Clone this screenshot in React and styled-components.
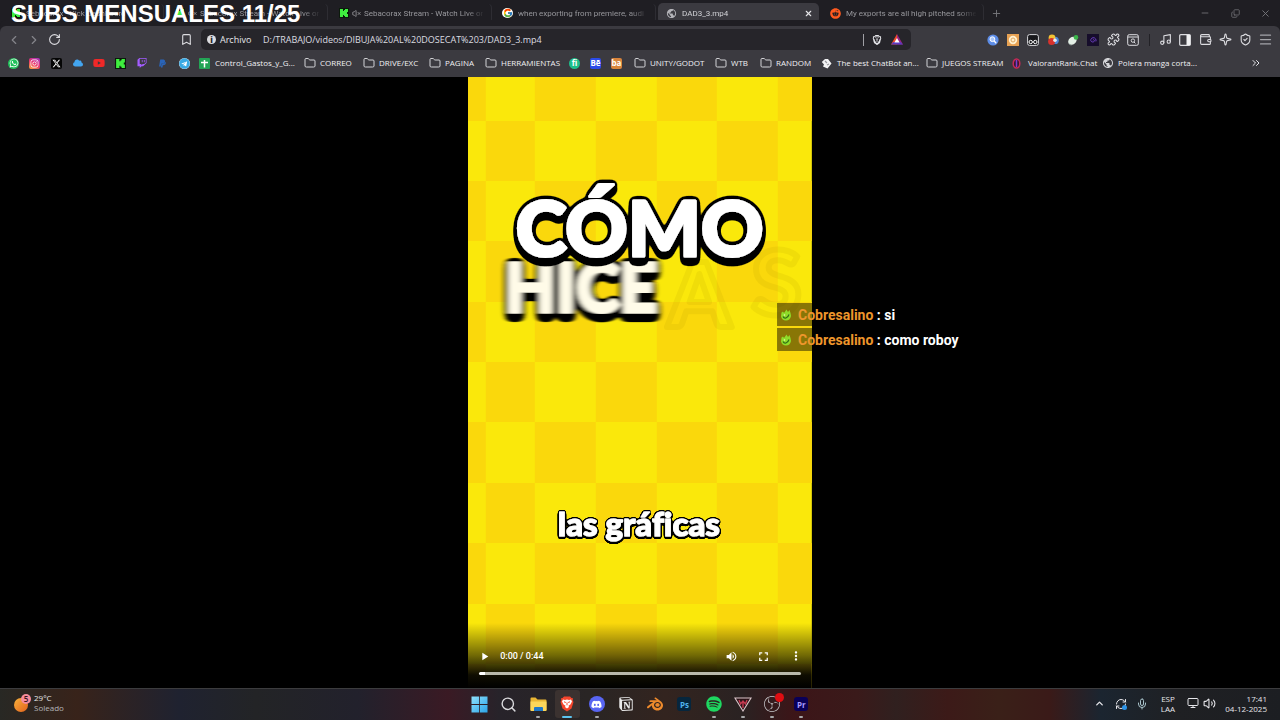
import React from "react";
import styled, { createGlobalStyle } from "styled-components";
import {
  Bookmark as BookmarkIcon,
  ChevronLeft,
  ChevronRight,
  ChevronUp,
  ChevronsRight,
  Copy,
  Folder,
  Menu,
  Mic,
  Minus,
  Monitor,
  Music,
  Plus,
  Puzzle,
  RefreshCw,
  RotateCw,
  Search,
  ShieldCheck,
  Sparkle,
  Volume2,
  VolumeX,
  Wallet,
  X,
} from "lucide-react";
import {
  FaCloud,
  FaInstagram,
  FaPaypal,
  FaReddit,
  FaTelegram,
  FaTwitch,
  FaWhatsapp,
  FaYoutube,
  FaDiscord,
  FaSpotify,
} from "react-icons/fa";
import { FaXTwitter } from "react-icons/fa6";
import { FcGoogle } from "react-icons/fc";
import { MdMoreVert, MdPlayArrow, MdPublic, MdVolumeUp, MdFullscreen } from "react-icons/md";
import { SiBlender, SiBrave, SiNotion, SiObsstudio } from "react-icons/si";

const KickLogo = ({ size = 10 }) => (
  <svg width={size} height={size} viewBox="0 0 10 10">
    <rect width="10" height="10" fill="#0b1a0b" />
    <path
      d="M1 1h3v2h1V2h1V1h3v3H8v1H7v0h1v1h1v3H6V8H5V7H4v2H1z"
      fill="#3fee3f"
    />
  </svg>
);

const SheetLogo = () => (
  <svg width="11" height="11" viewBox="0 0 11 11">
    <rect width="11" height="11" rx="1" fill="#23a455" />
    <path d="M5.5 2v7.5M2 4.5h7" stroke="#fff" strokeWidth="1.5" />
  </svg>
);

const BatLogo = () => (
  <svg width="12" height="11" viewBox="0 0 12 11">
    <path d="M6 0L0 10.5h6z" fill="#ef4a2b" />
    <path d="M6 0l6 10.5H6z" fill="#9b2384" />
    <path d="M0 10.5h12L9.5 8h-7z" fill="#5b3ac0" />
    <path d="M6 4L3.4 8.6h5.2z" fill="#fff" />
  </svg>
);

const LensIcon = () => (
  <svg width="12" height="12" viewBox="0 0 12 12">
    <circle cx="6" cy="6" r="5.6" fill="#5d8de8" />
    <circle cx="5.4" cy="5.2" r="2.4" fill="#a9c6fa" stroke="#fff" />
    <path d="M7.2 7l2 2.2" stroke="#fff" strokeWidth="1.3" />
  </svg>
);

const CookieIcon = () => (
  <svg width="12" height="12" viewBox="0 0 12 12">
    <rect width="12" height="12" fill="#e6a153" />
    <circle cx="6" cy="6" r="4.2" fill="#fff0cf" />
    <circle cx="6" cy="6" r="2" fill="none" stroke="#e0a860" />
  </svg>
);

const MaskIcon = () => (
  <svg width="12" height="12" viewBox="0 0 12 12">
    <rect x=".6" y=".6" width="10.8" height="10.8" rx="2" fill="#17171b" stroke="#d8d8dc" />
    <circle cx="3.7" cy="8" r="1.7" fill="none" stroke="#fff" />
    <circle cx="8.3" cy="8" r="1.7" fill="none" stroke="#fff" />
  </svg>
);

const BallsIcon = () => (
  <svg width="12" height="12" viewBox="0 0 12 12">
    <circle cx="8.2" cy="6.4" r="3.6" fill="#4b86d8" />
    <circle cx="5" cy="4" r="3.4" fill="#f2c233" />
    <circle cx="4.6" cy="7.6" r="3.5" fill="#d8322c" />
    <circle cx="8" cy="6.2" r="1.8" fill="#e9ecef" />
  </svg>
);

const LeafIcon = () => (
  <svg width="12" height="12" viewBox="0 0 12 12">
    <ellipse cx="5.4" cy="6.8" rx="4.6" ry="3.6" transform="rotate(-40 5.4 6.8)" fill="#e4efe6" />
    <circle cx="9" cy="3.4" r="2.3" fill="#3bb54a" />
    <path d="M2 9.5l2 2" stroke="#8fa39a" />
  </svg>
);

const SpiralIcon = () => (
  <svg width="12" height="12" viewBox="0 0 12 12">
    <rect width="12" height="12" fill="#160d2b" />
    <path d="M6 6.3c0-1 1.6-.8 1.5.4S5.4 8.5 4.3 7.5 3.8 4 6 3.7s3.6 2 2.9 3.7" fill="none" stroke="#6b3fc0" />
  </svg>
);

const ArchiveSearch = () => (
  <svg width="12" height="12" viewBox="0 0 12 12" fill="none" stroke="#dcdce0">
    <rect x=".7" y=".7" width="10.6" height="10.6" rx="1.5" />
    <path d="M.7 3h10.6M7 8l1.4 1.4" />
    <circle cx="5.9" cy="6.6" r="1.7" />
  </svg>
);

const SidebarIcon = () => (
  <svg width="12" height="12" viewBox="0 0 12 12">
    <rect x=".7" y=".7" width="10.6" height="10.6" rx="1" fill="none" stroke="#dcdce0" strokeWidth="1.2" />
    <path d="M7.5 1h3.8v10H7.5z" fill="#f0f0f2" />
  </svg>
);

const DiceIcon = () => (
  <svg width="11" height="11" viewBox="0 0 11 11">
    <path d="M4 1h3l3.5 4.5-4 5L2 8.5l1-2L.8 4z" fill="#f3f3f5" />
    <path d="M4 3l2 2M6 7l2-1" stroke="#98989e" strokeWidth="1.2" />
  </svg>
);

const ValorantIcon = () => (
  <svg width="9" height="11" viewBox="0 0 9 11">
    <ellipse cx="4.5" cy="5.5" rx="3.3" ry="4.5" fill="#3a1630" stroke="#c52a58" strokeWidth="1.5" />
    <path d="M4.5 2v7" stroke="#7d3cd0" strokeWidth="1.5" />
  </svg>
);

const WindowsLogo = () => (
  <svg width="17" height="17" viewBox="0 0 17 17">
    <defs>
      <linearGradient id="win" x1="0" y1="0" x2="1" y2="1">
        <stop offset="0" stopColor="#8fe0fb" />
        <stop offset="1" stopColor="#2ba4e8" />
      </linearGradient>
    </defs>
    <path d="M.5.5h7.6v7.6H.5zM8.9.5h7.6v7.6H8.9zM.5 8.9h7.6v7.6H.5zM8.9 8.9h7.6v7.6H8.9z" fill="url(#win)" />
  </svg>
);

const ExplorerLogo = () => (
  <svg width="17" height="15" viewBox="0 0 17 15">
    <path d="M.5 1.5q0-1 1-1h4l2 2h8q1 0 1 1V13q0 1-1 1h-14q-1 0-1-1z" fill="#e9b634" />
    <path d="M.5 4.5h16V13q0 1-1 1h-14q-1 0-1-1z" fill="#fbd65a" />
    <path d="M4 14v-3q0-1 1-1h7q1 0 1 1v3z" fill="#1f78c8" />
  </svg>
);

const BraveLogo = () => (
  <svg width="14" height="16" viewBox="0 0 14 16">
    <path d="M4 .5h6l1.5 1.5 1.5.3-.3 2.2.8 1.5-2 6.5L7 15.500 2.500 12.500.5 6l.8-1.500L1 2.300 2.500 2z" fill="#f4452c" />
    <path d="M3 3.5l2 .5 2-.6 2 .6 2-.5 1 2-1.6 3L8.500 9.700 9 11l-2 1.600L5 11l.5-1.300-1.900-1.200L2 5.500z" fill="#fff" />
    <path d="M4 5.8l1.8.7M10 5.8l-1.8.7M7 6.5v2.8" stroke="#f4452c" />
  </svg>
);

const CrestLogo = () => (
  <svg width="18" height="15" viewBox="0 0 18 15" fill="none">
    <path d="M1 1h16L9 14z" fill="#2a1418" stroke="#d9c4c8" strokeWidth="1.1" />
    <path d="M5 3l1.5 4L9 4l2.5 3L13 3M9 5v6" stroke="#c43a50" strokeWidth="1.4" />
  </svg>
);

const SunIcon = () => (
  <svg width="18" height="20" viewBox="0 0 18 20">
    <defs>
      <linearGradient id="sun" x1="0" y1="0" x2="1" y2="1">
        <stop offset="0" stopColor="#f9b23c" />
        <stop offset="1" stopColor="#e2621c" />
      </linearGradient>
    </defs>
    <circle cx="7" cy="12" r="7" fill="url(#sun)" />
    <circle cx="12" cy="6" r="5" fill="#f58c9b" />
    <text x="12" y="9" textAnchor="middle" fontSize="8" fontWeight="600" fill="#3a1218">5</text>
  </svg>
);

const FrogEmote = () => (
  <svg width="12" height="12" viewBox="0 0 12 12">
    <path d="M1.500 3.500l1.500-1 1 1.500L6.500.5 8 3l1.500-2 1 3 .5 3q-1 4.500-5 4.500T1 7.500z" fill="#8fdc2a" />
    <path d="M3 7.5q1 2 3 1.500T9 5.500" fill="none" stroke="#2f6d17" strokeWidth="1.2" />
    <circle cx="4.5" cy="6" r=".8" fill="#e8ffb0" />
  </svg>
);

const tabs = [
  { title: "Sebacorax - Kick Dashboard", icon: <KickLogo /> },
  { title: "Sebacorax Stream - Watch Live or", icon: <KickLogo />, muted: true },
  { title: "Sebacorax Stream - Watch Live or", icon: <KickLogo />, muted: true },
  { title: "when exporting from premiere, audi", icon: <FcGoogle size={10} />, round: true },
  { title: "DAD3_3.mp4", icon: <MdPublic size={11} color="#b5b5ba" />, active: true },
  { title: "My exports are all high pitched some", icon: <FaReddit size={11} color="#ff5a1f" /> },
];

const quickLinks = [
  { name: "WhatsApp", bg: "#20c15a", color: "#fff", round: true, icon: <FaWhatsapp size={10} /> },
  { name: "Instagram", bg: "linear-gradient(30deg,#fbb03b,#e8316e 50%,#9b36c8)", color: "#fff", icon: <FaInstagram size={9} /> },
  { name: "X", bg: "#050505", color: "#fff", icon: <FaXTwitter size={9} /> },
  { name: "OneDrive", color: "#43a5f0", icon: <FaCloud size={10} /> },
  { name: "YouTube", color: "#f02828", icon: <FaYoutube size={12} /> },
  { name: "Kick", icon: <KickLogo size={11} /> },
  { name: "Twitch", color: "#a35cff", icon: <FaTwitch size={10} /> },
  { name: "PayPal", color: "#2a64b8", icon: <FaPaypal size={9} /> },
  { name: "Telegram", bg: "#fff", color: "#39a9e4", round: true, icon: <FaTelegram size={11} /> },
];

const folder = <Folder size={12} strokeWidth={2} color="#d4d4d8" />;

const bookmarks = [
  { name: "Control_Gastos_y_G...", width: 105, icon: <SheetLogo /> },
  { name: "CORREO", width: 59, icon: folder },
  { name: "DRIVE/EXC", width: 66, icon: folder },
  { name: "PAGINA", width: 56, icon: folder },
  { name: "HERRAMIENTAS", width: 84, icon: folder },
  { width: 21, label: "Fiverr", badge: "fi", bg: "#1dbf8a", round: true },
  { width: 21, label: "Behance", badge: "Bē", bg: "#2b4be8" },
  { width: 23, label: "Bandai", badge: "ba", bg: "#d9843c" },
  { name: "UNITY/GODOT", width: 81, icon: folder },
  { name: "WTB", width: 45, icon: folder },
  { name: "RANDOM", width: 61, icon: folder },
  { name: "The best ChatBot an...", width: 105, icon: <DiceIcon /> },
  { name: "JUEGOS STREAM", width: 86, icon: folder },
  { name: "ValorantRank.Chat", width: 90, icon: <ValorantIcon /> },
  { name: "Polera manga corta...", width: 105, icon: <MdPublic size={12} color="#d4d4d8" /> },
];

const extensions = [
  ["Lens", <LensIcon />],
  ["Cookies", <CookieIcon />],
  ["Mask", <MaskIcon />],
  ["Colors", <BallsIcon />],
  ["Leaf", <LeafIcon />],
  ["Spiral", <SpiralIcon />],
  ["Extensions", <Puzzle size={13} />],
  ["Search page", <ArchiveSearch />],
];

const tools = [
  ["Playlist", <Music size={13} />],
  ["Sidebar", <SidebarIcon />],
  ["Wallet", <Wallet size={13} />],
  ["Leo", <Sparkle size={13} />],
  ["VPN", <ShieldCheck size={13} />],
  ["Menu", <Menu size={15} color="#a4a4a9" />],
];

const apps = [
  { name: "Inicio", icon: <WindowsLogo /> },
  { name: "Buscar", icon: <Search size={17} color="#d9d9dc" strokeWidth={2} /> },
  { name: "Explorador", icon: <ExplorerLogo />, open: true },
  { name: "Brave", icon: <BraveLogo />, current: true },
  { name: "Discord", icon: <FaDiscord size={11} />, bg: "#5865f2", round: true, open: true },
  { name: "Notion", icon: <SiNotion size={14} color="#eaeaea" /> },
  { name: "Blender", icon: <SiBlender size={16} color="#ee8a2c" /> },
  { name: "Photoshop", badge: "Ps", bg: "#06263d", color: "#4fb3ee" },
  { name: "Spotify", icon: <FaSpotify size={16} color="#1ed760" />, open: true },
  { name: "Crest", icon: <CrestLogo />, open: true },
  { name: "OBS", icon: <SiObsstudio size={16} color="#c9c9cc" />, open: true, alert: true },
  { name: "Premiere", badge: "Pr", bg: "#0a0058", color: "#a99cff", open: true },
];

const columns = [0, 18, 67, 128, 189, 249, 310, 344];
const rows = [0, 44, 104, 164, 225, 285, 345, 406, 466, 527, 587, 611];

const Checkers = () => (
  <g fill="#fad80c">
    {rows.slice(0, -1).map((y, r) =>
      columns.slice(0, -1).map((x, c) =>
        (r + c) % 2 === 0 ? (
          <rect
            key={`${r}-${c}`}
            x={x}
            y={y}
            width={columns[c + 1] - x}
            height={rows[r + 1] - y}
          />
        ) : null
      )
    )}
  </g>
);

// Grows the shape into a rounded black outline and drops it down for depth
const Outline = ({ id, spread, depth }) => (
  <filter id={id} x="-10%" y="-20%" width="120%" height="150%">
    <feGaussianBlur in="SourceAlpha" stdDeviation={spread} />
    <feComponentTransfer>
      <feFuncA type="linear" slope="14" intercept="-0.7" />
    </feComponentTransfer>
    <feColorMatrix values="0 0 0 0 0  0 0 0 0 0  0 0 0 0 0  0 0 0 1 0" result="edge" />
    <feOffset in="edge" dy={depth / 2} result="mid" />
    <feOffset in="edge" dy={depth} result="low" />
    <feMerge>
      <feMergeNode in="low" />
      <feMergeNode in="mid" />
      <feMergeNode in="edge" />
      <feMergeNode in="SourceGraphic" />
    </feMerge>
  </filter>
);

const VideoFrame = () => (
  <Picture viewBox="0 0 344 611" preserveAspectRatio="xMidYMid slice">
    <defs>
      <Outline id="outline-large" spread="2.5" depth="5" />
      <Outline id="outline-small" spread="1.3" depth="1" />
      <filter id="swoosh" x="-10%" y="-10%" width="120%" height="120%">
        <feGaussianBlur stdDeviation="2.5 0.7" />
      </filter>
      <linearGradient id="shade" x1="0" y1="0" x2="0" y2="1">
        <stop offset="0" stopColor="#000" stopOpacity="0" />
        <stop offset="0.5" stopColor="#000" stopOpacity="0.55" />
        <stop offset="0.8" stopColor="#000" stopOpacity="0.94" />
        <stop offset="1" stopColor="#000" />
      </linearGradient>
    </defs>
    <rect width="344" height="611" fill="#fae80b" />
    <Checkers />
    <g fontSize="90" fill="none" stroke="#b89a00" strokeOpacity="0.14" strokeLinejoin="round" strokeWidth="6">
      <text x="200" y="250">A</text>
      <text x="284" y="238">S</text>
    </g>
    <g filter="url(#swoosh)">
      <Caption x="37" y="235" fontSize="66" strokeWidth="3" $tint="#fffbe8" filter="url(#outline-large)">HICE</Caption>
    </g>
    <Caption x="48" y="179" fontSize="77" strokeWidth="3" filter="url(#outline-large)">CÓMO</Caption>
    <Caption x="90" y="459" fontSize="33" strokeWidth="1" filter="url(#outline-small)">las gráficas</Caption>
    <rect y="546" width="344" height="65" fill="url(#shade)" />
  </Picture>
);

const App = () => {
  return (
    <Desktop>
      <GlobalStyle />
      <TabStrip>
        {tabs.map((tab, i) => (
          <Tab key={i} $active={tab.active}>
            <Favicon $round={tab.round}>{tab.icon}</Favicon>
            {tab.muted && <MutedIcon size={9} />}
            <TabTitle $active={tab.active}>{tab.title}</TabTitle>
            {tab.active && (
              <TabClose aria-label="Cerrar">
                <X size={9} strokeWidth={3} />
              </TabClose>
            )}
          </Tab>
        ))}
        <NewTab aria-label="Nueva pestaña">
          <Plus size={11} />
        </NewTab>
        <WindowButtons>
          <WindowButton aria-label="Minimizar"><Minus size={10} /></WindowButton>
          <WindowButton aria-label="Restaurar"><FlippedCopy size={9} /></WindowButton>
          <WindowButton aria-label="Cerrar ventana"><X size={11} /></WindowButton>
        </WindowButtons>
      </TabStrip>

      <Chrome>
        <Toolbar>
          <IconButton aria-label="Atrás" $dim><ChevronLeft size={14} /></IconButton>
          <IconButton aria-label="Adelante" $dim><ChevronRight size={14} /></IconButton>
          <IconButton aria-label="Recargar"><RotateCw size={13} /></IconButton>
          <SaveSlot>
            <IconButton aria-label="Guardar"><BookmarkIcon size={13} /></IconButton>
          </SaveSlot>
          <AddressBar>
            <InfoDot>i</InfoDot>
            <AddressLabel htmlFor="address">Archivo</AddressLabel>
            <AddressInput
              id="address"
              defaultValue="D:/TRABAJO/videos/DIBUJA%20AL%20DOSECAT%203/DAD3_3.mp4"
            />
            <Divider $light />
            <IconButton aria-label="Shields"><SiBrave size={10} color="#e4e4e8" /></IconButton>
            <IconButton aria-label="Rewards"><BatLogo /></IconButton>
          </AddressBar>
          <ToolGroup>
            {extensions.map(([name, icon]) => (
              <IconButton key={name} aria-label={name}>{icon}</IconButton>
            ))}
            <DividerSlot><Divider /></DividerSlot>
            {tools.map(([name, icon]) => (
              <IconButton key={name} aria-label={name}>{icon}</IconButton>
            ))}
          </ToolGroup>
        </Toolbar>
        <BookmarksBar>
          <QuickLinks>
            {quickLinks.map((link) => (
              <QuickLink key={link.name} href="#" aria-label={link.name}>
                <Badge $bg={link.bg} $color={link.color} $round={link.round}>{link.icon}</Badge>
              </QuickLink>
            ))}
          </QuickLinks>
          {bookmarks.map((item) => (
            <BookmarkLink key={item.name || item.label} href="#" aria-label={item.label} $width={item.width}>
              {item.badge ? (
                <Badge $bg={item.bg} $color="#fff" $round={item.round}>{item.badge}</Badge>
              ) : (
                <BookmarkGlyph>{item.icon}</BookmarkGlyph>
              )}
              {item.name}
            </BookmarkLink>
          ))}
          <MoreButton aria-label="Más marcadores"><ChevronsRight size={12} /></MoreButton>
        </BookmarksBar>
      </Chrome>

      <Stage>
        <Player>
          <VideoFrame />
          <Controls>
            <ControlRow>
              <ControlButton aria-label="Reproducir"><MdPlayArrow size={13} /></ControlButton>
              <Time>0:00 / 0:44</Time>
              <ControlButton aria-label="Volumen"><MdVolumeUp size={13} /></ControlButton>
              <ControlButton aria-label="Pantalla completa"><MdFullscreen size={15} /></ControlButton>
              <ControlButton aria-label="Más opciones"><MdMoreVert size={14} /></ControlButton>
            </ControlRow>
            <Progress type="range" min="0" max="44" defaultValue="1" aria-label="Progreso" />
          </Controls>
        </Player>
      </Stage>

      <Taskbar>
        <Weather>
          <SunIcon />
          <Stack>
            <span>29°C</span>
            <Muted>Soleado</Muted>
          </Stack>
        </Weather>
        <Apps>
          {apps.map((app) => (
            <AppButton key={app.name} aria-label={app.name} $current={app.current} $open={app.open}>
              {app.bg ? (
                <AppBadge $bg={app.bg} $color={app.color} $round={app.round}>
                  {app.badge || app.icon}
                </AppBadge>
              ) : (
                app.icon
              )}
              {app.alert && <AlertDot />}
            </AppButton>
          ))}
        </Apps>
        <Tray>
          <TrayButton aria-label="Iconos ocultos"><ChevronUp size={11} strokeWidth={3} /></TrayButton>
          <TrayButton aria-label="Sincronización">
            <RefreshCw size={12} />
            <SyncDot />
          </TrayButton>
          <TrayButton aria-label="Micrófono"><Mic size={12} color="#a9c4cc" /></TrayButton>
          <Language>
            <span>ESP</span>
            <span>LAA</span>
          </Language>
          <Status>
            <Monitor size={12} />
            <Volume2 size={13} />
          </Status>
          <Clock>
            <span>17:41</span>
            <span>04-12-2025</span>
          </Clock>
        </Tray>
      </Taskbar>

      <Goal>SUBS MENSUALES 11/25</Goal>
      <Chat>
        <ChatLine>
          <FrogEmote />
          <ChatText><ChatName>Cobresalino</ChatName> : si</ChatText>
        </ChatLine>
        <ChatLine>
          <FrogEmote />
          <ChatText><ChatName>Cobresalino</ChatName> : como roboy</ChatText>
        </ChatLine>
      </Chat>
    </Desktop>
  );
};

const GlobalStyle = createGlobalStyle`
  * {
    box-sizing: border-box;
  }
  body {
    margin: 0;
    background: #000;
    color: #e6e6ea;
    font-family: "Open Sans", "Noto Sans", sans-serif;
    font-size: 8px;
  }
  button {
    padding: 0;
    border: 0;
    background: none;
    color: inherit;
    font: inherit;
  }
  svg {
    flex-shrink: 0;
  }
`;

const Desktop = styled.div`
  position: relative;
  display: flex;
  flex-direction: column;
  height: 100vh;
  overflow: hidden;
`;

const TabStrip = styled.div`
  display: flex;
  align-items: center;
  height: 26px;
  padding-left: 2px;
  background: #1f1e23;
`;

const Tab = styled.div`
  display: flex;
  align-items: center;
  gap: 5px;
  width: 161px;
  height: 21px;
  margin-right: 3px;
  padding: 0 6px 0 8px;
  border-radius: 5px;
  background: ${({ $active }) => ($active ? "#3b3a40" : "transparent")};
  box-shadow: ${({ $active }) => ($active ? "none" : "2px 0 0 -1px #2e2d33")};
`;

const Favicon = styled.span`
  display: flex;
  justify-content: center;
  width: 11px;
  border-radius: ${({ $round }) => ($round ? "50%" : "0")};
  background: ${({ $round }) => ($round ? "#fff" : "transparent")};
`;

const MutedIcon = styled(VolumeX)`
  margin: 0 -2px;
  color: #a5a5aa;
`;

const TabTitle = styled.span`
  flex: 1;
  overflow: hidden;
  white-space: nowrap;
  color: ${({ $active }) => ($active ? "#d2d2d6" : "#97979c")};
  font-family: Roboto, "Open Sans", sans-serif;
  mask-image: linear-gradient(90deg, #000 85%, transparent);
`;

const TabClose = styled.button`
  display: flex;
`;

const NewTab = styled.button`
  display: flex;
  padding: 5px;
  color: #77777c;
`;

const WindowButtons = styled.div`
  display: flex;
  margin-left: auto;
`;

const WindowButton = styled.button`
  display: flex;
  align-items: center;
  justify-content: center;
  width: 30px;
  height: 26px;
  color: #77777c;
`;

const FlippedCopy = styled(Copy)`
  transform: scaleY(-1);
`;

const Chrome = styled.div`
  background: #3b3a40;
  border-radius: 6px 6px 0 0;
  box-shadow: 0 -6px 0 #1f1e23;
`;

const Toolbar = styled.div`
  display: flex;
  align-items: center;
  height: 27px;
  padding: 0 5px 0 4px;
`;

const IconButton = styled.button`
  display: flex;
  align-items: center;
  justify-content: center;
  width: 20px;
  height: 20px;
  color: ${({ $dim }) => ($dim ? "#85858a" : "#dcdce0")};
`;

const SaveSlot = styled.div`
  margin: 0 5px 0 112px;
`;

const AddressBar = styled.div`
  display: flex;
  align-items: center;
  flex: 1;
  height: 21px;
  padding: 0 4px 0 6px;
  border-radius: 5px;
  background: #26252a;
`;

const InfoDot = styled.span`
  display: flex;
  align-items: center;
  justify-content: center;
  width: 9px;
  height: 9px;
  border-radius: 50%;
  background: #dcdce0;
  color: #26252a;
  font-weight: 800;
`;

const AddressLabel = styled.label`
  width: 43px;
  margin-left: 4px;
  font-size: 9px;
`;

const AddressInput = styled.input`
  flex: 1;
  min-width: 0;
  padding: 0;
  border: 0;
  outline: 0;
  background: none;
  color: #dcdce0;
  font: inherit;
  font-size: 9px;
`;

const Divider = styled.span`
  width: 1px;
  height: 12px;
  margin-right: ${({ $light }) => ($light ? "3px" : "0")};
  background: ${({ $light }) => ($light ? "#a0a0a5" : "#222126")};
`;

const DividerSlot = styled.span`
  display: flex;
  justify-content: center;
  width: 12px;
`;

const ToolGroup = styled.div`
  display: flex;
  align-items: center;
  margin-left: 72px;
`;

const BookmarksBar = styled.div`
  display: flex;
  align-items: center;
  height: 24px;
  padding: 0 18px 4px 3px;
`;

const QuickLinks = styled.div`
  display: grid;
  grid-template-columns: repeat(9, 1fr);
  width: 192px;
  margin-right: 4px;
`;

const QuickLink = styled.a`
  display: flex;
  justify-content: center;
  text-decoration: none;
`;

const Badge = styled.span`
  display: flex;
  align-items: center;
  justify-content: center;
  width: 11px;
  height: 11px;
  border-radius: ${({ $round }) => ($round ? "50%" : "2px")};
  background: ${({ $bg }) => $bg || "transparent"};
  color: ${({ $color }) => $color || "inherit"};
  font-weight: 700;
`;

const BookmarkLink = styled.a`
  display: flex;
  align-items: center;
  width: ${({ $width }) => $width}px;
  color: #f0f0f3;
  line-height: 10px;
  text-decoration: none;
  white-space: nowrap;
`;

const BookmarkGlyph = styled.span`
  display: flex;
  width: 16px;
`;

const MoreButton = styled.button`
  display: flex;
  margin-left: auto;
`;

const Stage = styled.main`
  display: flex;
  justify-content: center;
  flex: 1;
  min-height: 0;
  background: #000;
`;

const Player = styled.div`
  position: relative;
  height: 100%;
  aspect-ratio: 9 / 16;
`;

const Picture = styled.svg`
  display: block;
  width: 100%;
  height: 100%;
  font-family: Lato, "Open Sans", sans-serif;
  font-weight: 900;
`;

const Caption = styled.text`
  fill: ${({ $tint }) => $tint || "#fff"};
  stroke: ${({ $tint }) => $tint || "#fff"};
  stroke-linejoin: round;
  font-variant-ligatures: none;
`;

const Controls = styled.div`
  position: absolute;
  inset: auto 0 0;
  padding: 0 11px 13px;
`;

const ControlRow = styled.div`
  display: flex;
  align-items: center;
  height: 22px;
  margin-right: -11px;
  margin-left: -11px;
`;

const ControlButton = styled.button`
  display: flex;
  align-items: center;
  justify-content: center;
  width: 32px;
  height: 22px;
  color: #fff;
`;

const Time = styled.span`
  flex: 1;
  color: #fff;
  font-family: Roboto, sans-serif;
  font-size: 9px;
  font-weight: 500;
`;

const Progress = styled.input`
  display: block;
  appearance: none;
  width: 100%;
  height: 3px;
  margin: 5px 0 0;
  border-radius: 2px;
  background: linear-gradient(90deg, #fff 2%, #b9b9ab 2%);

  &::-webkit-slider-thumb {
    appearance: none;
    width: 1px;
    height: 1px;
  }
`;

const Taskbar = styled.footer`
  display: grid;
  grid-template-columns: 1fr 352px 1fr;
  height: 32px;
  box-shadow: inset 0 1px 0 #3c3c3e;
  background: linear-gradient(
    90deg,
    #282824 0%,
    #38231a 6%,
    #1f2230 14%,
    #232426 20%,
    #22212c 28%,
    #3a1a24 35%,
    #27232a 39%,
    #292524 46%,
    #33241f 52%,
    #2a2222 58%,
    #3c1518 62%,
    #3a1a1a 67%,
    #30201f 70%,
    #3c1a18 74%,
    #3a2018 78%,
    #3a1a18 82%,
    #1b2530 86%,
    #1f2023 92%,
    #1c1e22 100%
  );
`;

const Weather = styled.div`
  display: flex;
  align-items: center;
  gap: 2px;
  padding: 0 0 2px 14px;
`;

const Stack = styled.div`
  display: flex;
  flex-direction: column;
  line-height: 10px;
`;

const Muted = styled.span`
  color: #b5b5b8;
`;

const Apps = styled.div`
  display: grid;
  grid-template-columns: repeat(12, 1fr);
  padding-left: 1px;
`;

const AppButton = styled.button`
  position: relative;
  display: flex;
  align-items: center;
  justify-content: center;
  margin: 2px;
  border-radius: 3px;
  background: ${({ $current }) => ($current ? "#3b3230" : "none")};

  &::after {
    content: "";
    position: absolute;
    bottom: 0;
    width: ${({ $current }) => ($current ? "10px" : "4px")};
    height: 2px;
    border-radius: 1px;
    background: ${({ $current, $open }) =>
      $current ? "#5cc4f0" : $open ? "#a8a8aa" : "transparent"};
  }
`;

const AppBadge = styled.span`
  display: flex;
  align-items: center;
  justify-content: center;
  width: ${({ $round }) => ($round ? "16px" : "14px")};
  height: ${({ $round }) => ($round ? "16px" : "14px")};
  border-radius: ${({ $round }) => ($round ? "50%" : "3px")};
  background: ${({ $bg }) => $bg};
  color: ${({ $color }) => $color || "#fff"};
  font-weight: 700;
`;

const AlertDot = styled.span`
  position: absolute;
  top: 3px;
  right: 1px;
  width: 9px;
  height: 9px;
  border-radius: 50%;
  background: #e00d12;
`;

const Tray = styled.div`
  display: flex;
  align-items: center;
  justify-content: flex-end;
  padding: 0 13px 1px 0;
`;

const TrayButton = styled.button`
  position: relative;
  display: flex;
  justify-content: center;
  width: 21px;
`;

const SyncDot = styled.span`
  position: absolute;
  right: 4px;
  bottom: 0;
  width: 5px;
  height: 5px;
  border-radius: 50%;
  background: #2d93e6;
`;

const Language = styled(Stack)`
  align-items: center;
  width: 32px;
`;

const Status = styled.div`
  display: flex;
  gap: 4px;
  margin-left: 3px;
`;

const Clock = styled(Stack)`
  align-items: flex-end;
  width: 51px;
`;

const Goal = styled.div`
  position: absolute;
  top: 0;
  left: 11px;
  color: #fff;
  font-family: "Liberation Sans", Arial, sans-serif;
  font-size: 24px;
  font-weight: 700;
  line-height: 27px;
  white-space: nowrap;
`;

const Chat = styled.div`
  position: absolute;
  top: 303px;
  left: calc(50% + 137px);
  display: flex;
  flex-direction: column;
  gap: 2px;
`;

const ChatLine = styled.div`
  display: flex;
  align-items: center;
  gap: 6px;
  height: 23px;
  padding: 0 3px;
  background: rgba(0, 0, 0, 0.45);
`;

const ChatText = styled.span`
  color: #fff;
  font-family: Roboto, sans-serif;
  font-size: 14px;
  font-weight: 700;
`;

const ChatName = styled.span`
  color: #ee962c;
`;

export default App;
